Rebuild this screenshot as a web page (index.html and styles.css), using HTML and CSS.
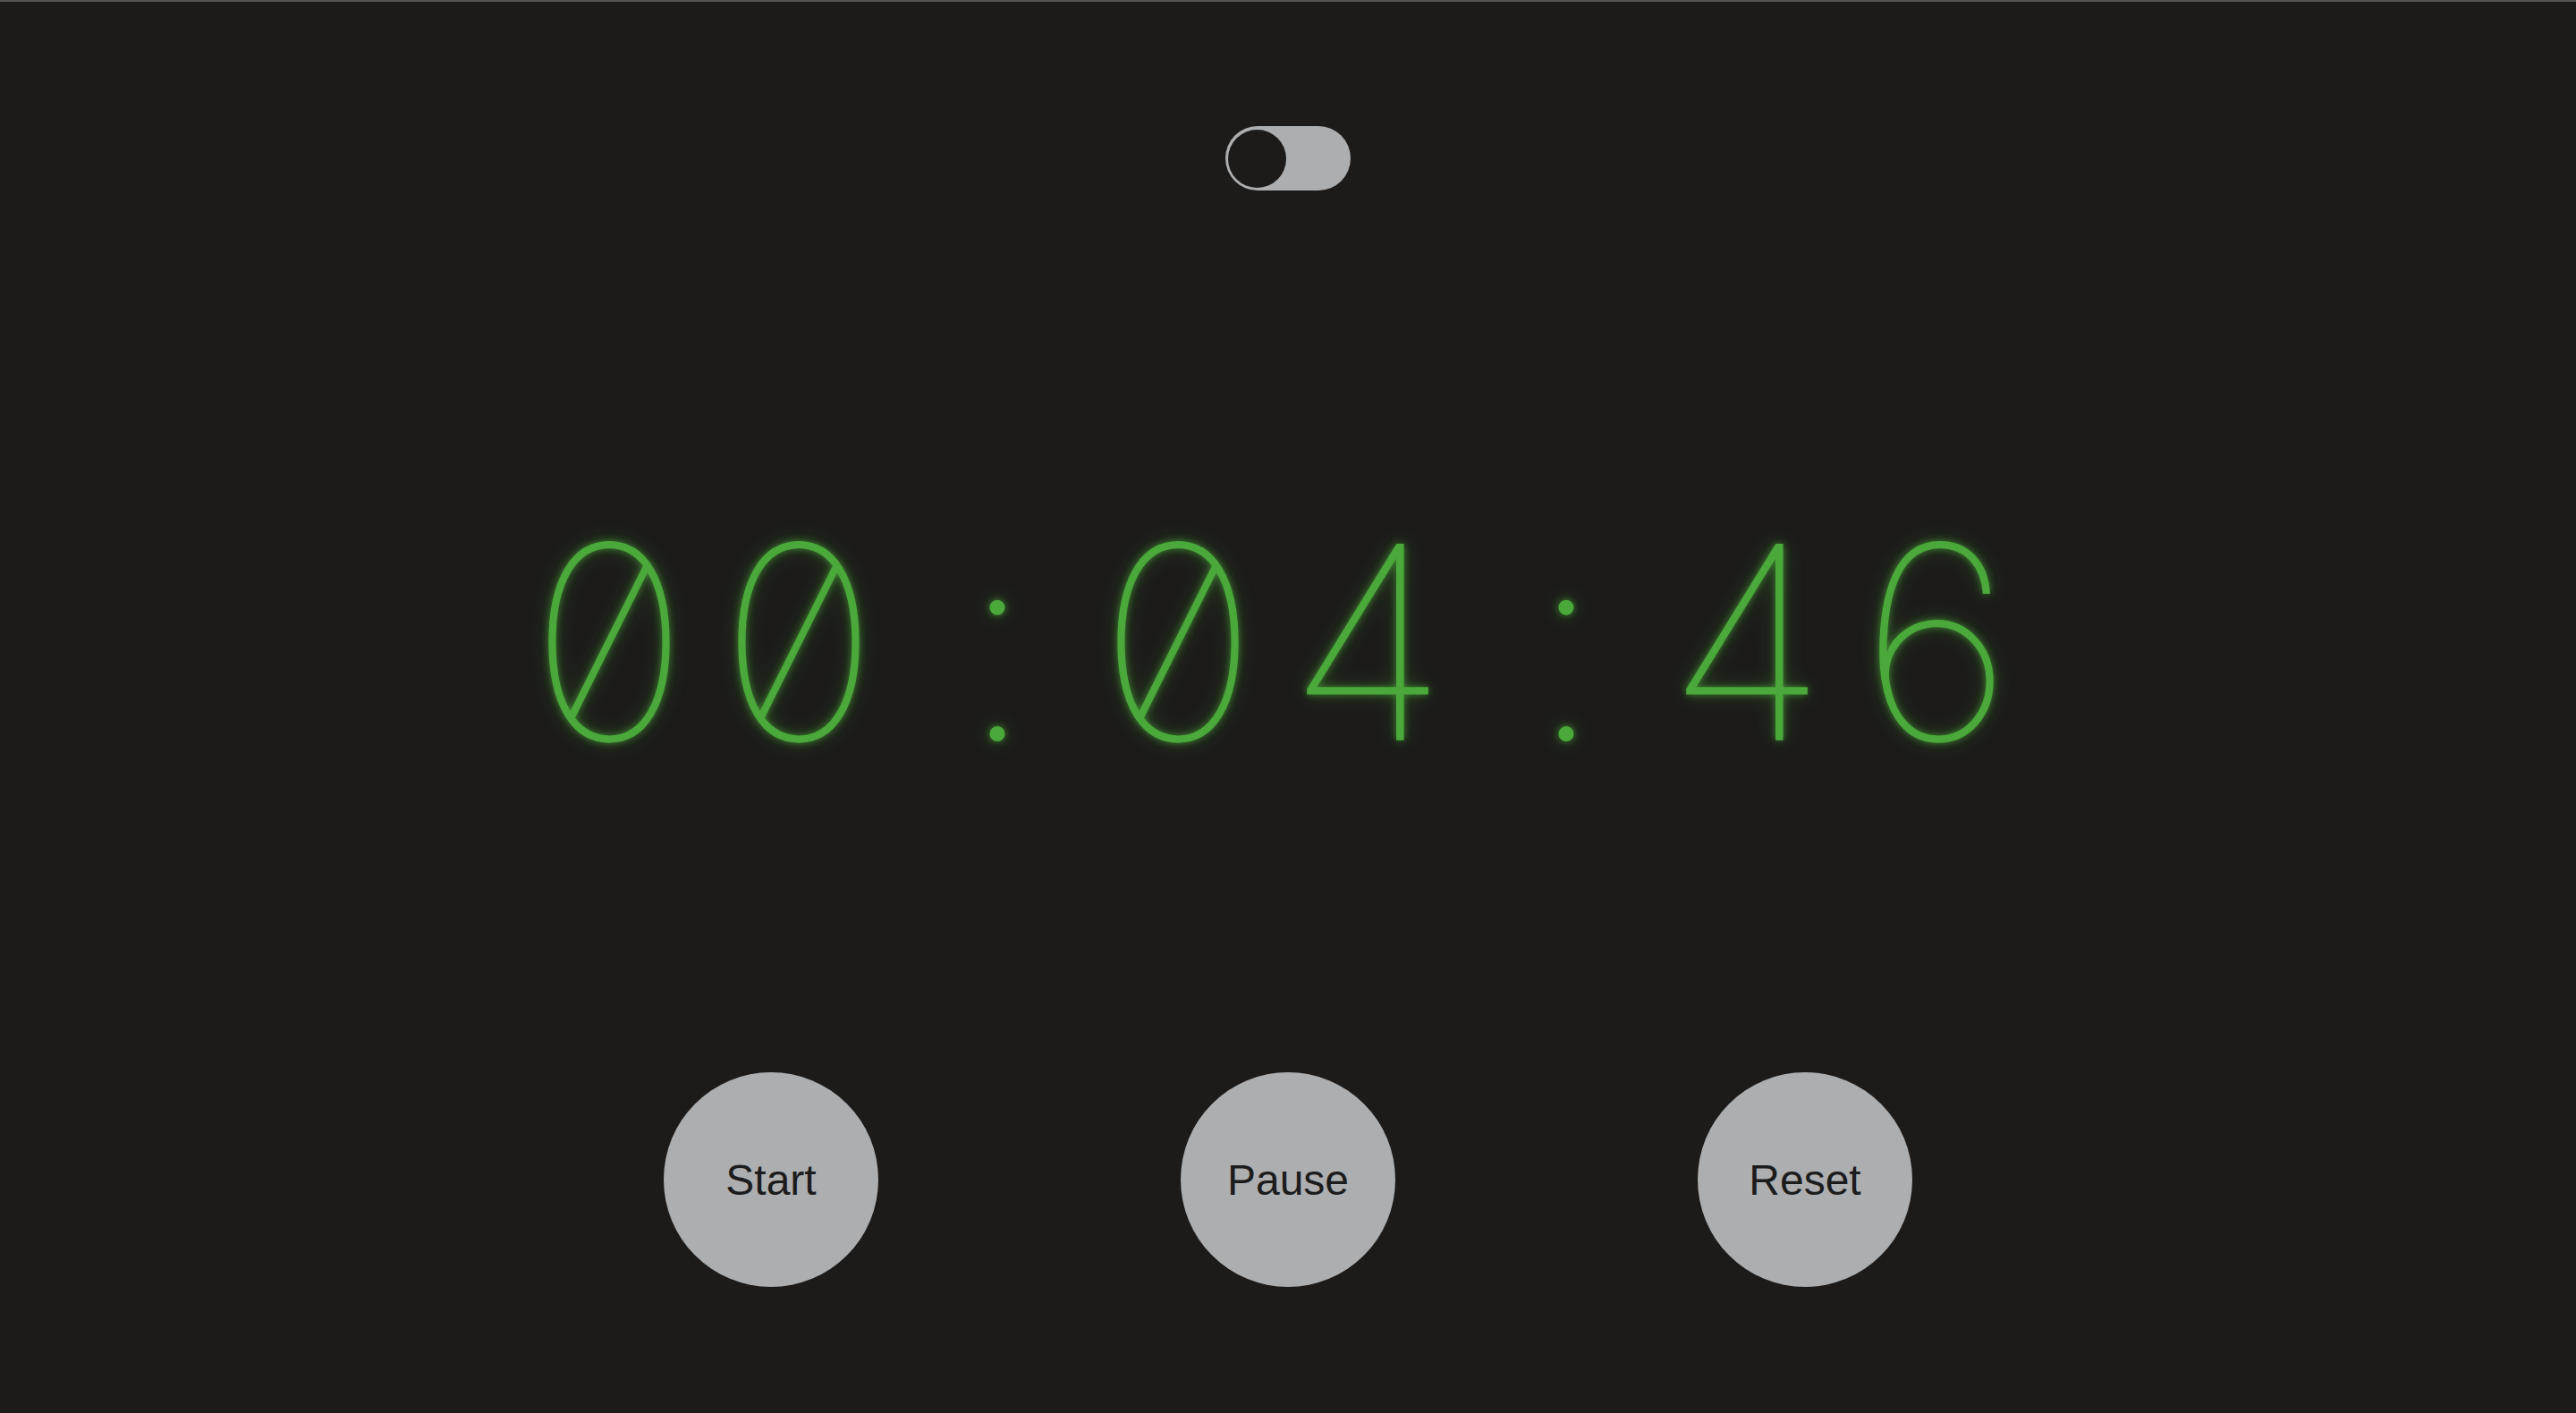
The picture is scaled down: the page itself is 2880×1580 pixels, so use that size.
FILE: index.html
```html
<!DOCTYPE html>
<html lang="en">
<head>
<meta charset="utf-8">
<title>Stopwatch</title>
<link rel="stylesheet" href="styles.css">
</head>
<body>
<main class="app">
  <div class="toggle-row">
    <div class="toggle" role="switch" aria-checked="false"><span class="knob"></span></div>
  </div>
  <div class="clock" aria-label="00:04:46">
    <span class="ch">0</span><span class="ch">0</span><span class="ch sep">:</span><span class="ch">0</span><span class="ch">4</span><span class="ch sep">:</span><span class="ch">4</span><span class="ch">6</span>
  </div>
  <div class="controls">
    <button class="btn">Start</button>
    <button class="btn">Pause</button>
    <button class="btn">Reset</button>
  </div>
</main>
</body>
</html>
```
FILE: styles.css
```css
html, body {
  margin: 0;
  padding: 0;
  background: #1c1b19;
  height: 100%;
}
body {
  border-top: 2px solid #555452;
  box-sizing: border-box;
  font-family: "Liberation Sans", Arial, sans-serif;
}
.app {
  display: flex;
  flex-direction: column;
  align-items: center;
}
.toggle-row {
  padding-top: 139px;
}
.toggle {
  width: 140px;
  height: 72px;
  border-radius: 36px;
  background: #adaeb0;
  box-sizing: border-box;
  padding: 4px 3px;
  display: flex;
  align-items: center;
}
.knob {
  width: 65px;
  height: 65px;
  border-radius: 50%;
  background: #1c1b19;
}
.clock {
  margin-top: 355px;
  display: flex;
  padding-right: 34px;
  font-family: "Inter", sans-serif;
  font-weight: 100;
  font-size: 300px;
  line-height: 300px;
  font-feature-settings: "zero" 1, "tnum" 1;
  color: #4aa93a;
  -webkit-text-stroke: 1.5px #4aa93a;
  text-shadow: 0 0 8px rgba(74, 169, 58, 0.9), 0 0 22px rgba(74, 169, 58, 0.45);
}
.ch {
  width: 212px;
  text-align: center;
}
.sep {
  padding-left: 20px;
  box-sizing: border-box;
}
.controls {
  margin-top: 331px;
  display: flex;
  gap: 338px;
}
.btn {
  width: 240px;
  height: 240px;
  border-radius: 50%;
  border: none;
  background: #adaeb0;
  color: #1c1c1c;
  font-family: "Liberation Sans", Arial, sans-serif;
  font-size: 48px;
  padding: 0;
  cursor: pointer;
}
```
